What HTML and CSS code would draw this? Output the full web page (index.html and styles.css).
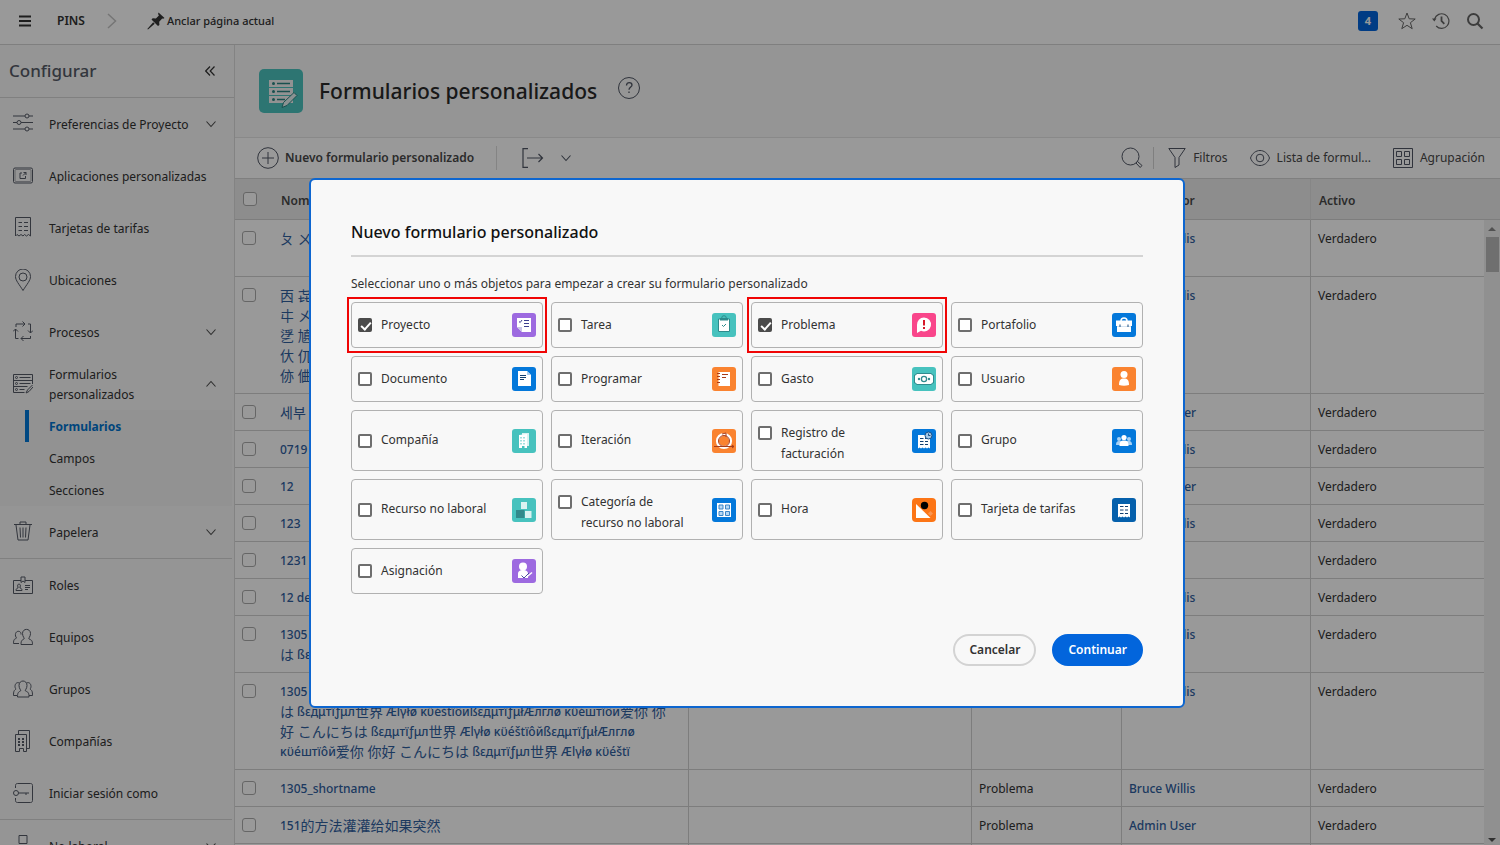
FILE: index.html
```html
<!DOCTYPE html>
<html lang="es">
<head>
<meta charset="utf-8">
<title>Formularios personalizados</title>
<link rel="stylesheet" href="styles.css">
</head>
<body>
<svg class="sprite" aria-hidden="true">
  <symbol id="chev" viewBox="0 0 12 12"><path d="M1.500 3.500 6 8.500l4.500-5" fill="none" stroke="currentColor" stroke-width="1.100"/></symbol>
</svg>
<div class="app">
  <header class="topbar">
    <button class="icon-btn menu" aria-label="Menú"><svg width="12" height="12" viewBox="0 0 12 12"><path d="M0 1.500h12M0 6h12M0 10.500h12" stroke="currentColor" stroke-width="2"/></svg></button>
    <span class="pins">PINS</span>
    <svg class="crumb" width="10" height="16" viewBox="0 0 10 16"><path d="M1 1l7.500 7L1 15" fill="none" stroke="currentColor" stroke-width="1.500"/></svg>
    <button class="pin-page"><svg width="18" height="18" viewBox="0 0 18 18"><path d="M11.500.5 17.500 6l-1.300.8-1-.3-3 3.300.2 3.200-1.400 1L4.500 7.500l1.200-1.300 3.200.2 3-3-.8-1.400zM6.200 10.200l1.500 1.500L1 17.500l-.7-.6z" fill="currentColor"/></svg><span>Anclar página actual</span></button>
    <div class="top-tools">
      <button class="count">4</button>
      <button class="icon-btn" aria-label="Favoritos"><svg width="18" height="18" viewBox="0 0 18 18"><path d="M9 1l2.200 5.800 6 .2-4.800 3.700 1.800 6L9 13.300l-5.200 3.400 1.800-6L.8 7l6-.2z" fill="none" stroke="currentColor"/></svg></button>
      <button class="icon-btn" aria-label="Recientes"><svg width="18" height="18" viewBox="0 0 18 18"><path d="M2.600 7A7.300 7.300 0 1 1 4.200 14" fill="none" stroke="currentColor" stroke-width="1.200"/><path d="M0 6.500h4.500L2.300 9.500z" fill="currentColor"/><path d="M9.500 4.500V9l2.800 2.800" fill="none" stroke="currentColor" stroke-width="1.800"/></svg></button>
      <button class="icon-btn" aria-label="Buscar"><svg width="18" height="18" viewBox="0 0 18 18"><circle cx="7.500" cy="7.500" r="5.500" fill="none" stroke="currentColor" stroke-width="2"/><path d="M11.500 11.500l5 5" stroke="currentColor" stroke-width="2.200"/></svg></button>
    </div>
  </header>

  <div class="columns">
    <aside class="sidebar">
      <div class="side-head"><h2>Configurar</h2>
        <button class="icon-btn" aria-label="Contraer"><svg width="10" height="10" viewBox="0 0 10 10"><path d="M5 .5.700 5 5 9.500M9.500.5 5.200 5l4.300 4.500" fill="none" stroke="currentColor" stroke-width="1.200"/></svg></button>
      </div>
      <nav>
        <ul class="side-list">
          <li><button class="item"><svg class="ico" viewBox="0 0 20 22"><path d="M0 4h12M16 4h4M0 10.500h4M8 10.500h12M0 17h12M16 17h4"/><circle cx="14" cy="4" r="2"/><circle cx="6" cy="10.500" r="2"/><circle cx="14" cy="17" r="2"/></svg><span>Preferencias de Proyecto</span><svg class="chev"><use href="#chev"/></svg></button></li>
          <li><a class="item" href="#"><svg class="ico" viewBox="0 0 20 22"><rect x=".5" y="4" width="19" height="15" rx="1.500"/><rect x="2" y="5.500" width="16" height="12" rx="1" opacity=".5"/><path d="M9 9H7v5.500h5.500V12M10 11.500l3-3M10.500 8.500H13V11"/></svg><span>Aplicaciones personalizadas</span></a></li>
          <li><a class="item" href="#"><svg class="ico" viewBox="0 0 20 22"><path d="M2.500 1.500h15v18.500l-2-1.500-2 1.500-2-1.500-1.500 1.500-2-1.500-2 1.500-2-1.500-1.500 1.500zM5.500 6.500H9M11 6.500h4M5.500 10.500H9M11 10.500h4M5.500 14.500H9M11 14.500h4"/></svg><span>Tarjetas de tarifas</span></a></li>
          <li><a class="item low" href="#"><svg class="ico" viewBox="0 0 20 22"><path d="M10 21.500C6 15 2.500 11.500 2.500 7.500a7.500 7.500 0 0 1 15 0C17.500 11.500 14 15 10 21.500z"/><circle cx="10" cy="8" r="4"/></svg><span>Ubicaciones</span></a></li>
          <li><button class="item"><svg class="ico" viewBox="0 0 20 22"><path d="M3 7V4h9M9.500 1.500 12 4 9.500 6.500M15 4h2.500v9M15 10.500l2.500 2.500 2.500-2.500M17.500 16v2.500H8M10.500 16 8 18.500l2.500 2.500M5.500 18.500H2.500V9M0 11.500 2.500 9 5 11.500"/></svg><span>Procesos</span><svg class="chev"><use href="#chev"/></svg></button></li>
          <li><button class="item"><svg class="ico" viewBox="0 0 20 22"><path d="M19.500 12V2.500H.5v18h11M.5 8.500h19M.5 14.500h14M6.500 5.500h11M6.500 11.500h11M6.500 17.500h5M19.500 13l-5 5-1.500 3 3-1.500 4-4.500"/><circle cx="3.500" cy="5.500" r="1"/><circle cx="3.500" cy="11.500" r="1"/><circle cx="3.500" cy="17.500" r="1"/></svg><span>Formularios personalizados</span><svg class="chev up"><use href="#chev"/></svg></button>
            <ul class="sub">
              <li><a class="current" href="#">Formularios</a></li>
              <li><a href="#">Campos</a></li>
              <li><a href="#">Secciones</a></li>
            </ul></li>
          <li><button class="item"><svg class="ico" viewBox="0 0 20 22"><path d="M1 4.500h18M7 4V2h6v2M3 5l2 15h10l2-15M7 7.500l.5 10M10 7.500v10M13 7.500l-.5 10"/></svg><span>Papelera</span><svg class="chev"><use href="#chev"/></svg></button></li>
        </ul>
        <ul class="side-list">
          <li><a class="item low" href="#"><svg class="ico" viewBox="0 0 20 22"><path d="M8 6.500H.5v13h19v-13H12M8 3h4v5.500l-2-1.500-2 1.500zM12 11.500h5M12 13.500h5M12 15.500h3M3 16.500h6c0-2-1-2-2-2.500v-1c1-1.500 0-3-1-3s-2 1.500-1 3v1c-1 .5-2 .5-2 2.500z"/></svg><span>Roles</span></a></li>
          <li><a class="item low" href="#"><svg class="ico" viewBox="0 0 20 22"><path d="M6 17.500H.5c0-4 1-4.500 2.500-5 1-.5 0-1-.5-2.500-1-6 6-6 5.500-1.500M8 18.500c0-4 1-4.500 3-5.500 1-.8-1.500-2-1.500-5.500 0-5.500 8-5.500 8 0 0 3.500-2.500 4.700-1.500 5.500 2.500 1 3.500 1.500 3.500 5.500z"/></svg><span>Equipos</span></a></li>
          <li><a class="item low" href="#"><svg class="ico" viewBox="0 0 20 22"><path d="M4.500 19c0-4.500 1-5 3-6 1-.8-1.500-2-1.500-5.500 0-6 8-6 8 0 0 3.500-2.500 4.700-1.500 5.500 2.500 1 3.500 1.500 3.500 6zM4 17.500H.5c0-4 .5-5 2-6 1-.5-.5-1-.5-3C2 5 4.500 4 6.500 5M16 17.500h3.500c0-4-.5-5-2-6-1-.5.500-1 .5-3 0-3.500-2.500-4.500-4.500-3.500"/></svg><span>Grupos</span></a></li>
          <li><a class="item low" href="#"><svg class="ico" viewBox="0 0 20 22"><path d="M2.500 21.500v-17h11v17h-3v-3h-4v3zM5.500 4.500v-4h11v18h-3"/><path d="M5 9h2M9 9h2M5 12h2M9 12h2M5 15h2M9 15h2" stroke-width="2"/></svg><span>Compañías</span></a></li>
          <li><a class="item low" href="#"><svg class="ico" viewBox="0 0 20 22"><path d="M2.500 6V3.500c0-1 .5-2 2-2h13c1 0 2 .5 2 2v15c0 1-.5 2-2 2h-13c-1 0-2-.5-2-2V16M5.500 11H16M13 11v2"/><circle cx="3" cy="11" r="2.500"/></svg><span>Iniciar sesión como</span></a></li>
        </ul>
        <ul class="side-list">
          <li><button class="item"><svg class="ico" viewBox="0 0 20 22"><path d="M6 1.500h8v8H6zM2 14h16v8"/></svg><span>No laboral</span><svg class="chev"><use href="#chev"/></svg></button></li>
        </ul>
      </nav>
    </aside>

    <main class="main">
      <div class="page-head">
        <svg width="44" height="44" viewBox="0 0 44 44"><rect width="44" height="44" rx="5" fill="#4bc3bf"/><path d="M10 11h24v7H10zM10 19h24v7H10zM10 27h24v7H10z" fill="#f4f4f4"/><path d="M18 14.500h13M18 22.500h13M18 30.500h8" stroke="#2a8583" stroke-width="1.500"/><circle cx="14.500" cy="14.500" r="1.500" fill="#2a8583"/><circle cx="14.500" cy="22.500" r="1.500" fill="#2a8583"/><circle cx="14.500" cy="30.500" r="1.500" fill="#2a8583"/><path d="M23 38.500l1.500-5L35 23.500l3 3L28 36.500z" fill="#e8f4f4" stroke="#2a8583"/></svg>
        <h1>Formularios personalizados</h1>
        <button class="icon-btn help" aria-label="Ayuda"><svg width="22" height="22" viewBox="0 0 22 22" fill="none" stroke="currentColor"><circle cx="11" cy="11" r="10.500"/><path d="M8.500 8.500c0-4 5.500-3.500 5.500-.5 0 2-3 2-3 4.800M11 14.500v1.500" stroke-width="1.300"/></svg></button>
      </div>
      <div class="toolbar">
        <button class="tool strong"><svg width="22" height="22" viewBox="0 0 22 22" fill="none" stroke="currentColor"><circle cx="11" cy="11" r="10.300"/><path d="M11 5v12M5 11h12"/></svg>Nuevo formulario personalizado</button>
        <button class="tool export" aria-label="Exportar"><svg width="22" height="20" viewBox="0 0 22 20" fill="none" stroke="currentColor" stroke-width="1.200"><path d="M6 .6H1v18.800h5M5 10h15M16.500 6l4 4-4 4"/></svg><svg class="chev"><use href="#chev"/></svg></button>
        <div class="tool-right">
          <button class="tool find" aria-label="Buscar en la lista"><svg width="22" height="22" viewBox="0 0 22 22" fill="none" stroke="currentColor"><circle cx="9.500" cy="9.500" r="8.500"/><path d="M15 16l1.500-1.500 4.500 4-1.800 2z"/></svg></button>
          <button class="tool"><svg width="18" height="20" viewBox="0 0 18 20" fill="none" stroke="currentColor"><path d="M.8.5h16.400L11 9.500V17l-4 2.500v-10z"/></svg>Filtros</button>
          <button class="tool"><svg width="20" height="16" viewBox="0 0 20 16" fill="none" stroke="currentColor"><path d="M.5 8C4-2 16-2 19.500 8 16 18 4 18 .5 8z"/><circle cx="10" cy="8" r="3.800"/></svg>Lista de formul...</button>
          <button class="tool"><svg width="20" height="20" viewBox="0 0 20 20" fill="none" stroke="currentColor"><path d="M.5.5h19v19H.5zM3.500 3.500h5v5h-5zM11.500 3.500h5v5h-5zM3.500 11.500h5v5h-5zM11.500 11.500h5v5h-5z"/></svg>Agrupación</button>
        </div>
      </div>
      <div class="grid">
        <table>
          <colgroup><col class="c-check"><col class="c-name"><col><col class="c-type"><col class="c-owner"><col class="c-active"></colgroup>
          <thead><tr><th><input type="checkbox" aria-label="Seleccionar todo"></th><th>Nombre</th><th></th><th></th><th>Creado por</th><th>Activo</th></tr></thead>
          <tbody>
            <tr class="h2"><td><input type="checkbox" aria-label="Fila 1"></td><td><a href="#"><span class="cjk">ㄆ ㄨ</span></a></td><td></td><td></td><td><a href="#">Bruce Willis</a></td><td>Verdadero</td></tr>
            <tr><td><input type="checkbox" aria-label="Fila 2"></td><td><a href="#"><span class="cjk">㐁 㐂<br>㐄 㐅<br>㐢 㐤<br>㐲 㐳<br>㑊 㑋</span></a></td><td></td><td></td><td><a href="#">Bruce Willis</a></td><td>Verdadero</td></tr>
            <tr><td><input type="checkbox" aria-label="Fila 3"></td><td><a href="#"><span class="cjk">세부</span></a></td><td></td><td></td><td><a href="#">Admin User</a></td><td>Verdadero</td></tr>
            <tr><td><input type="checkbox" aria-label="Fila 4"></td><td><a href="#">0719</a></td><td></td><td></td><td><a href="#">Bruce Willis</a></td><td>Verdadero</td></tr>
            <tr><td><input type="checkbox" aria-label="Fila 5"></td><td><a href="#">12</a></td><td></td><td></td><td><a href="#">Admin User</a></td><td>Verdadero</td></tr>
            <tr><td><input type="checkbox" aria-label="Fila 6"></td><td><a href="#">123</a></td><td></td><td></td><td><a href="#">Bruce Willis</a></td><td>Verdadero</td></tr>
            <tr><td><input type="checkbox" aria-label="Fila 7"></td><td><a href="#">1231</a></td><td></td><td></td><td></td><td>Verdadero</td></tr>
            <tr><td><input type="checkbox" aria-label="Fila 8"></td><td><a href="#">12 de</a></td><td></td><td></td><td><a href="#">Bruce Willis</a></td><td>Verdadero</td></tr>
            <tr><td><input type="checkbox" aria-label="Fila 9"></td><td><a href="#">1305 Æ<br><span class="cjk">は</span> ßεд</a></td><td></td><td></td><td><a href="#">Bruce Willis</a></td><td>Verdadero</td></tr>
            <tr><td><input type="checkbox" aria-label="Fila 10"></td><td><a href="#">1305 Æ<br><span class="cjk">は</span> ßεдμтïƒμл<span class="cjk">世界</span> Ælγłø κϋéštïôйßεдμтïƒμłÆлглø κϋéштïôй<span class="cjk">爱你 你</span><br><span class="cjk">好 こんにちは</span> ßεдμтïƒμл<span class="cjk">世界</span> Ælγłø κϋéštïôйßεдμтïƒμłÆлглø<br>κϋéштïôй<span class="cjk">爱你 你好 こんにちは</span> ßεдμтïƒμл<span class="cjk">世界</span> Ælγłø κϋéštï</a></td><td></td><td></td><td><a href="#">Bruce Willis</a></td><td>Verdadero</td></tr>
            <tr><td><input type="checkbox" aria-label="Fila 11"></td><td><a href="#">1305_shortname</a></td><td></td><td>Problema</td><td><a href="#">Bruce Willis</a></td><td>Verdadero</td></tr>
            <tr><td><input type="checkbox" aria-label="Fila 12"></td><td><a href="#">151<span class="cjk">的方法灌灌给如果突然</span></a></td><td></td><td>Problema</td><td><a href="#">Admin User</a></td><td>Verdadero</td></tr>
            <tr><td></td><td></td><td></td><td></td><td></td><td></td></tr>
          </tbody>
        </table>
        <div class="scroll"><div class="scroll-head"></div><div class="track"><i class="arrow"></i><i class="thumb"></i><i class="arrow down"></i></div></div>
      </div>
    </main>
  </div>
</div>

<div class="overlay">
  <form class="modal" role="dialog" aria-labelledby="dlg-title">
    <h2 id="dlg-title">Nuevo formulario personalizado</h2>
    <p>Seleccionar uno o más objetos para empezar a crear su formulario personalizado</p>
    <div class="cards">
      <label class="card marked"><input type="checkbox" checked><span>Proyecto</span><svg viewBox="0 0 24 24"><rect width="24" height="24" rx="3" fill="#9d6ae0"/><path d="M5 5h14v14h-9l-5-5z" fill="#fff"/><path d="M5 14h5v5z" fill="#c9c5e6"/><path d="M12 7.500h5M12 10.500h5M12 13.500h5M7 8.500l1.200 1L10 7" stroke="#3d3f8f" fill="none"/></svg></label>
      <label class="card"><input type="checkbox"><span>Tarea</span><svg viewBox="0 0 24 24"><rect width="24" height="24" rx="3" fill="#47c2be"/><circle cx="12" cy="5" r="2.300" fill="none" stroke="#2d8b8c"/><path d="M6.500 6h11v12.500h-11z" fill="#fff" stroke="#2d8b8c"/><path d="M8 5h8v2.500H8z" fill="#2d8b8c"/><path d="M10 12l1.500 1.500L14 11" fill="none" stroke="#2d8b8c"/></svg></label>
      <label class="card marked"><input type="checkbox" checked><span>Problema</span><svg viewBox="0 0 24 24"><rect width="24" height="24" rx="3" fill="#f9468b"/><path d="M12 4.500a7 7 0 1 1-3 13.300L5 20V12a7 7 0 0 1 7-7.500z" fill="#fff"/><path d="M12 7v5.500M12 14v2" stroke="#d7182a" stroke-width="2"/></svg></label>
      <label class="card"><input type="checkbox"><span>Portafolio</span><svg viewBox="0 0 24 24"><rect width="24" height="24" rx="3" fill="#0478da"/><path d="M9 8c0-4 6-4 6 0" fill="none" stroke="#fff" stroke-width="1.500"/><path d="M4 7.500h16V13h-1v6H5v-6H4z" fill="#fff"/><path d="M5 13.500h14" stroke="#d5e4f2"/><path d="M8 11.500v2.500M16 11.500v2.500" stroke="#174b7c"/></svg></label>
      <label class="card"><input type="checkbox"><span>Documento</span><svg viewBox="0 0 24 24"><rect width="24" height="24" rx="3" fill="#0478da"/><path d="M6 4h9l4 4v11H6z" fill="#fff"/><path d="M15 4l4 4h-4z" fill="#a5cdf1"/><path d="M8 8.500h6M8 10.500h6M8 12.500h4" stroke="#123f70"/></svg></label>
      <label class="card"><input type="checkbox"><span>Programar</span><svg viewBox="0 0 24 24"><rect width="24" height="24" rx="3" fill="#fa8330"/><path d="M6.500 5H18v14H6.500z" fill="#fff"/><path d="M5 6.500h3M5 9.500h3M5 12.500h3M5 15.500h3M10 7.500h6M10 10.500h4" stroke="#a83b18"/></svg></label>
      <label class="card"><input type="checkbox"><span>Gasto</span><svg viewBox="0 0 24 24"><rect width="24" height="24" rx="3" fill="#47c2be"/><path d="M4.500 6.500h15c0 1 .5 1.500 2 1.500v8c-1.500 0-2 .5-2 1.500h-15c0-1-.5-1.500-2-1.500V8c1.500 0 2-.5 2-1.500z" fill="#fff" stroke="#308b8e"/><circle cx="12" cy="12" r="2.600" fill="none" stroke="#308b8e" stroke-width="1.300"/><circle cx="7" cy="12" r="1.200" fill="#308b8e"/><circle cx="17" cy="12" r="1.200" fill="#308b8e"/></svg></label>
      <label class="card"><input type="checkbox"><span>Usuario</span><svg viewBox="0 0 24 24"><rect width="24" height="24" rx="3" fill="#fa8330"/><circle cx="12" cy="7.500" r="3.500" fill="#fff"/><path d="M7 18c0-5 1.500-6.500 5-6.500s5 1.500 5 6.500q-5 1.500-10 0z" fill="#fff"/></svg></label>
      <label class="card"><input type="checkbox"><span>Compañía</span><svg viewBox="0 0 24 24"><rect width="24" height="24" rx="3" fill="#47c2be"/><path d="M10 4h7v13h-7z" fill="#d9f2f1"/><path d="M7 6l8-1v14h-2.500v-2h-2.500v2H7z" fill="#fff"/><path d="M9 8v8M12 8v8" stroke="#47c2be" stroke-dasharray="1.500 1.500"/></svg></label>
      <label class="card"><input type="checkbox"><span>Iteración</span><svg viewBox="0 0 24 24"><rect width="24" height="24" rx="3" fill="#fa8330"/><circle cx="12" cy="12" r="6.600" fill="none" stroke="#fff" stroke-width="3"/><circle cx="12" cy="12" r="5.500" fill="none" stroke="#a83b18"/><path d="M2 17.500h20M20 16l2 1.500-2 1.500M10 5l4-1v4" stroke="#a83b18" fill="none"/></svg></label>
      <label class="card wrap"><input type="checkbox"><span>Registro de facturación</span><svg viewBox="0 0 24 24"><rect width="24" height="24" rx="3" fill="#0478da"/><path d="M6 6h12v13.500l-1.500-1-1.500 1-1.500-1-1.500 1-1.500-1-1.500 1-1.500-1-1.500 1z" fill="#fff"/><path d="M8 9.500h3.500M13 9.500h3M8 12.500h3.500M13 12.500h3M8 15.500h3.500M13 15.500h3" stroke="#123f70"/><circle cx="16.500" cy="6.500" r="3.500" fill="#a6c9e8" stroke="#174f88"/><path d="M16.500 4.500v2h2" fill="none" stroke="#174f88"/></svg></label>
      <label class="card"><input type="checkbox"><span>Grupo</span><svg viewBox="0 0 24 24"><rect width="24" height="24" rx="3" fill="#0478da"/><g fill="#a8d1f4"><circle cx="7" cy="10" r="2"/><circle cx="17" cy="10" r="2"/><path d="M4 16c0-3 1-4 3-4h10c2 0 3 1 3 4z"/></g><circle cx="12" cy="8.500" r="2.600" fill="#fff"/><path d="M7.500 17c0-4 1-5.500 4.500-5.500s4.500 1.500 4.500 5.500z" fill="#fff"/></svg></label>
      <label class="card"><input type="checkbox"><span>Recurso no laboral</span><svg viewBox="0 0 24 24"><rect width="24" height="24" rx="3" fill="#47c2be"/><path d="M9 4h6v7H9zM13 13h6.500v7H13z" fill="#daf2f1"/><path d="M4 12h8.500v8H4z" fill="#31898b"/></svg></label>
      <label class="card wrap"><input type="checkbox"><span>Categoría de recurso no laboral</span><svg viewBox="0 0 24 24"><rect width="24" height="24" rx="3" fill="#0478da"/><path d="M5 5h14v14H5z" fill="#fff"/><path d="M7 7h4v4H7zM13.500 7h4v4h-4zM7 13.500h4v4H7zM13.500 13.500h4v4h-4z" fill="#b7d8f4" stroke="#3c86c8"/></svg></label>
      <label class="card"><input type="checkbox"><span>Hora</span><svg viewBox="0 0 24 24"><rect width="24" height="24" rx="4" fill="#fc7516"/><path d="M4 6l14.500 14H4z" fill="#fff"/><circle cx="12.500" cy="7.500" r="3.700" fill="#000"/><path d="M18.500 13l2.500 2.500-2.500 2.500-2.500-2.500z" fill="#fa9550"/></svg></label>
      <label class="card"><input type="checkbox"><span>Tarjeta de tarifas</span><svg viewBox="0 0 24 24"><rect width="24" height="24" rx="3" fill="#0560ac"/><path d="M6 6h12v13.500l-1.500-1-1.500 1-1.500-1-1.500 1-1.500-1-1.500 1-1.500-1-1.500 1z" fill="#fff"/><path d="M8 8.500h3.500M13 8.500h3M8 12h3.500M13 12h3M8 15.500h3.500M13 15.500h3" stroke="#123f70"/></svg></label>
      <label class="card"><input type="checkbox"><span>Asignación</span><svg viewBox="0 0 24 24"><rect width="24" height="24" rx="3" fill="#9d6ae0"/><circle cx="11" cy="7.500" r="4" fill="#fff"/><path d="M6 19v-4c0-3 2-4 5-4s5 1 5 4v4z" fill="#fff"/><path d="M9.500 16.500l2.500 2.500 5-5" fill="none" stroke="#4a4a9c"/><path d="M14 18.500l6-5" stroke="#fff" stroke-width="1.500"/></svg></label>
    </div>
    <div class="actions"><button type="button" class="btn">Cancelar</button><button type="button" class="btn primary">Continuar</button></div>
  </form>
</div>
</body>
</html>
```
FILE: styles.css
```css
* { box-sizing: border-box; }
body {
  margin: 0;
  font: 12px/20px "Noto Sans", "Noto Sans CJK SC", "Noto Sans CJK KR", sans-serif;
  color: #323232;
  background: #fff;
}
h1, h2, p, ul { margin: 0; padding: 0; }
ul { list-style: none; }
a { color: inherit; text-decoration: none; }
button { font: inherit; color: inherit; background: none; border: 0; padding: 0; }
svg { display: block; flex: none; }
.sprite { position: absolute; width: 0; height: 0; }
.chev { width: 12px; height: 12px; }
.chev.up { transform: rotate(180deg); }
.cjk { font-size: 14px; line-height: 20px; font-weight: 400; vertical-align: top; }

.app { display: flex; flex-direction: column; height: 100vh; overflow: hidden; }
.topbar {
  display: flex;
  align-items: center;
  flex: none;
  height: 45px;
  padding: 0 16px 3px 19px;
  border-bottom: 1px solid #d4d4d4;
}
.pins { margin-left: 26px; font-weight: 600; }
.crumb { margin-left: 22px; color: #c4c4c4; }
.pin-page { display: flex; align-items: center; gap: 2px; margin-left: 30px; font-size: 11px; font-weight: 500; }
.top-tools { display: flex; align-items: center; gap: 16px; margin-left: auto; color: #666; }
.count { width: 20px; height: 20px; margin-right: 4px; border-radius: 3px; background: #0265dc; color: #fff; font-size: 11px; font-weight: 700; }

.columns { display: flex; flex: 1; min-height: 0; }
.sidebar { flex: none; width: 235px; border-right: 1px solid #dadada; background: #f8f8f8; overflow: hidden; }
.side-head { display: flex; align-items: center; justify-content: space-between; height: 53px; padding: 0 19px 0 9px; border-bottom: 1px solid #d6d6d6; }
.side-head h2 { font-size: 17px; font-weight: 500; color: #555a66; }
.side-list { margin-right: 2px; }
.side-list + .side-list { border-top: 1px solid #d6d6d6; }
.item { display: flex; align-items: center; width: 100%; height: 52px; padding: 0 15px 0 13px; text-align: left; }
.item span { flex: 1; margin-left: 16px; padding-top: 2px; }
.ico { width: 20px; height: 22px; margin-bottom: 3px; fill: none; stroke: #555a66; }
.low .ico { margin-bottom: 0; }
.item .chev { color: #4c4c4c; }
.sub { background: #f3f3f3; }
.sub a { display: block; margin-left: 25px; padding: 7px 0 5px 20px; border-left: 4px solid transparent; }
.sub .current { border-color: #0079d9; color: #0073cf; font-weight: 700; }

.main { display: flex; flex-direction: column; flex: 1; min-width: 0; }
.page-head { display: flex; align-items: center; flex: none; height: 93px; padding-left: 24px; border-bottom: 1px solid #e4e4e4; background: #f8f8f8; }
.page-head h1 { margin-left: 16px; font-size: 21px; line-height: 28px; font-weight: 500; color: #2a2a2a; }
.help { margin: 0 0 6px 21px; color: #505664; }
.toolbar { display: flex; align-items: center; flex: none; height: 41px; padding: 0 15px 0 22px; border-bottom: 1px solid #d4d4d4; }
.tool { display: flex; align-items: center; gap: 6px; color: #484848; }
.tool.strong { font-weight: 600; }
.tool svg { color: #505664; }
.export { gap: 16px; margin-left: 22px; padding: 2px 0 2px 25px; border-left: 1px solid #dcdcdc; }
.tool-right { display: flex; align-items: center; gap: 22px; margin-left: auto; }
.tool-right .tool { gap: 7px; }
.tool-right .find { margin-right: -8px; padding-right: 10px; border-right: 1px solid #d4d4d4; }

.grid { display: flex; flex: 1; min-height: 0; overflow: hidden; }
table { flex: 1; width: 0; align-self: flex-start; table-layout: fixed; border-collapse: separate; border-spacing: 0; }
.c-check { width: 38px; }
.c-name { width: 416px; }
.c-type { width: 150px; }
.c-owner { width: 189px; }
.c-active { width: 173px; }
th, td { text-align: left; vertical-align: top; border-bottom: 1px solid #d0d0d0; }
td { height: 37px; padding: 9px 7px 7px; border-right: 1px solid #d0d0d0; white-space: nowrap; overflow: hidden; }
.h2 td { height: 57px; }
td:first-child, td:last-child { border-right: 0; }
th { height: 41px; padding: 12px 8px 8px; background: #ececec; font-weight: 600; color: #484848; }
th:nth-child(5) { border-right: 1px solid #e0e0e0; }
td a { color: #30609f; font-weight: 500; }
table input { display: block; appearance: none; width: 14px; height: 14px; margin: 2px 0; border: 1px solid #aaa; border-radius: 3px; background: #fff; }
th input { margin: 1px 0; }
.scroll { display: flex; flex-direction: column; width: 16px; }
.scroll-head { height: 41px; background: #ececec; border-bottom: 1px solid #d0d0d0; }
.track { display: flex; flex: 1; flex-direction: column; align-items: center; padding: 7px 0 3px; background: #f1f1f1; }
.arrow { border: 4px solid transparent; border-top: 0; border-bottom-color: #888; }
.thumb { width: 13px; height: 35px; margin-top: 6px; background: #b9b9b9; }
.arrow.down { margin-top: auto; border-top: 4px solid #505050; border-bottom: 0; }

.overlay { position: fixed; inset: 0; display: flex; justify-content: center; align-items: flex-start; padding: 178px 6px 0 0; background: rgba(0, 0, 0, .4); }
.modal { width: 876px; padding: 40px; border: 2px solid #0d66d0; border-radius: 6px; background: #f8f8f8; }
.modal h2 { padding-bottom: 11px; border-bottom: 2px solid #d4d4d4; font-size: 16px; line-height: 24px; font-weight: 500; color: #111; }
.modal p { margin: 17px 0 8px; }
.cards { display: grid; grid-template-columns: repeat(4, 1fr); gap: 8px; }
.card { position: relative; display: flex; align-items: center; min-height: 46px; padding: 6px; border: 1px solid #b1b1b1; border-radius: 4px; line-height: 21px; }
.card span { flex: 1; padding: 0 24px 2px 9px; }
.card svg { width: 24px; height: 24px; }
.card input { flex: none; appearance: none; position: relative; width: 14px; height: 14px; margin: 0; border: 2px solid #6e6e6e; border-radius: 2px; background: #fff; }
.card.wrap span { padding: 5px 24px 0 9px; }
.card.wrap input { align-self: flex-start; margin-top: 9px; }
.card input:checked { border-color: #4b4b4b; background: #4b4b4b; }
.card input:checked::after { content: ""; position: absolute; left: 3px; top: 0; width: 4px; height: 8px; border: solid #fff; border-width: 0 2px 2px 0; transform: rotate(42deg); }
.marked::after { content: ""; position: absolute; inset: -6px -5px; border: 2px solid #f00505; }
.actions { display: flex; justify-content: flex-end; gap: 16px; margin-top: 40px; }
.btn { height: 32px; padding: 0 14px; border: 2px solid #d3d3d3; border-radius: 16px; font-weight: 600; }
.primary { border-color: #0265dc; background: #0265dc; color: #fff; }
```
